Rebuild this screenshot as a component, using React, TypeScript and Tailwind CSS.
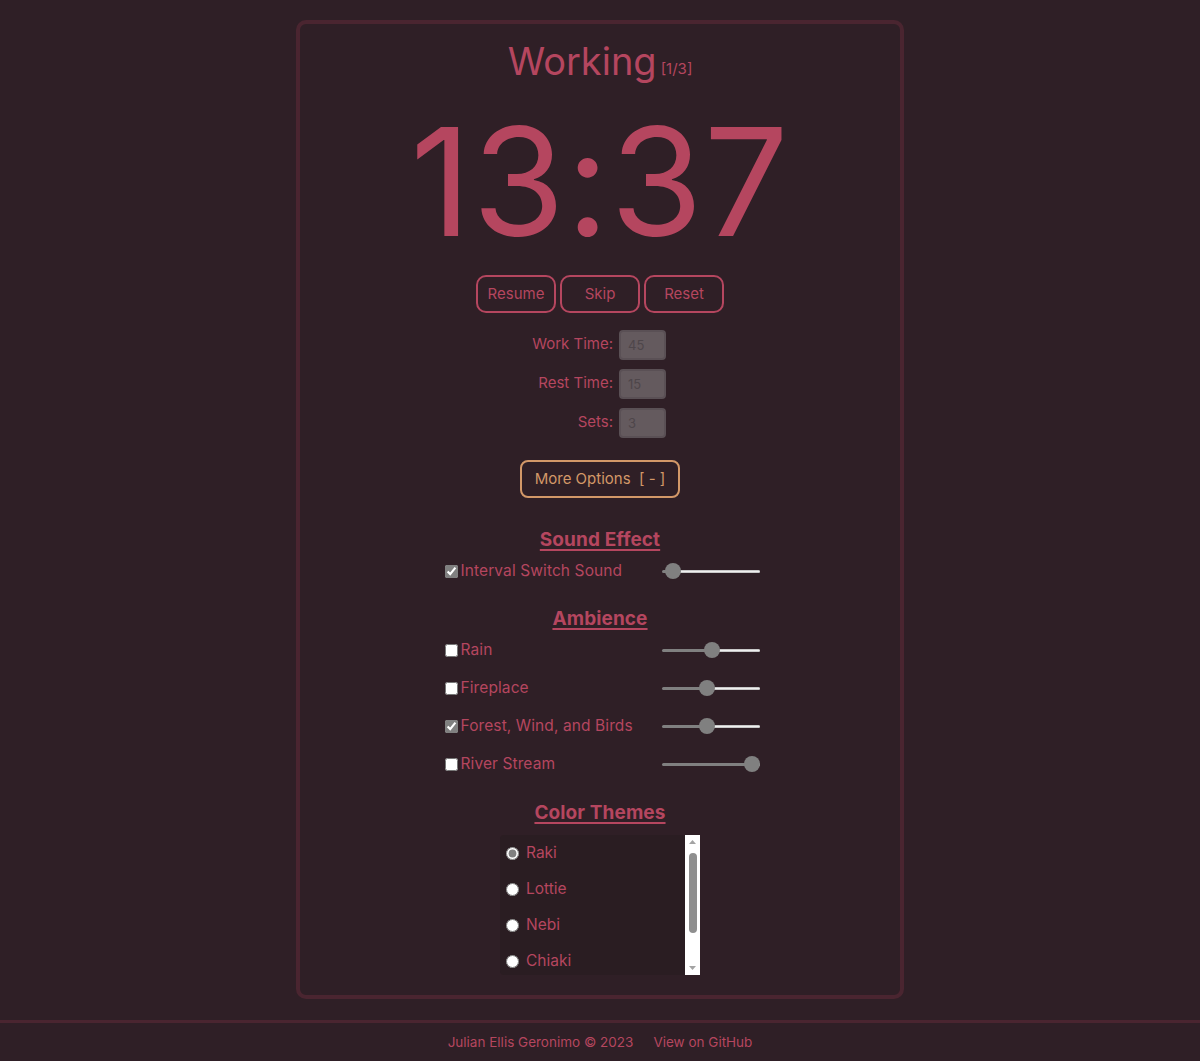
import React from "react";

const font = { fontFamily: "Inter, 'Noto Sans', sans-serif" };

function Row({ label, value }: { label: string; value: string }) {
  return (
    <div className="flex items-center justify-center h-[39px]">
      <div className="w-[200px] flex justify-end items-center gap-[6px]">
        <span className="text-[15px] text-[#b5465f]">{label}</span>
        <input
          disabled
          value={value}
          readOnly
          className="w-[47px] h-[30px] rounded-[4px] bg-[#645a5e] border-2 border-[#5a5055] text-[13px] text-[#4e464a] px-[7px]"
        />
      </div>
      <div className="w-[68px]" />
    </div>
  );
}

function Slider({ value }: { value: number }) {
  const left = (value / 100) * 82;
  return (
    <div className="relative w-[98px] h-[16px] flex items-center">
      <div className="h-[3px] bg-[#808080] rounded-l-[2px]" style={{ width: left + 8 }} />
      <div className="h-[3px] flex-1 bg-[#efefef] border-y border-[#c8c8c8] rounded-r-[2px]" />
      <div className="absolute top-0 w-[16px] h-[16px] rounded-full bg-[#808080]" style={{ left }} />
    </div>
  );
}

function SoundRow({ label, checked, value }: { label: string; checked?: boolean; value: number }) {
  return (
    <div className="flex items-center w-[316px] h-[38px] ml-[3px]">
      <input type="checkbox" defaultChecked={checked} className="accent-[#808080] w-[13px] h-[13px] m-0 ml-[1px]" />
      <span className="ml-[3px] text-[15.5px] tracking-[0.1px] text-[#b5465f] flex-1">{label}</span>
      <Slider value={value} />
    </div>
  );
}

function Heading({ children, className = "" }: { children: React.ReactNode; className?: string }) {
  return (
    <h2 className={`text-[19px] font-bold tracking-[0.1px] underline decoration-[2px] underline-offset-[3px] text-[#b5465f] leading-[26px] ${className}`}>
      {children}
    </h2>
  );
}

export default function App() {
  const themes = ["Raki", "Lottie", "Nebi", "Chiaki"];
  return (
    <div className="min-h-[1061px] bg-[#2f1f26] flex flex-col items-center" style={font}>
      <div className="mt-[20px] w-[608px] h-[979px] border-4 border-[#4a2530] rounded-[10px] flex flex-col items-center">
        <div className="mt-[13px] flex items-end text-[#b5465f]">
          <span className="text-[38px] leading-[48px]">Working</span>
          <span className="text-[15px] leading-[24px] ml-[4px] mb-[4px]">[1/3]</span>
        </div>
        <div className="text-[150px] leading-[150px] text-[#b5465f] mt-[22px] tracking-[1px]">13:37</div>
        <div className="flex gap-[4px] mt-[18px]">
          {["Resume", "Skip", "Reset"].map((b) => (
            <button key={b} className="w-[80px] h-[38px] border-2 border-[#b5465f] rounded-[10px] text-[15px] text-[#b5465f]">
              {b}
            </button>
          ))}
        </div>
        <div className="mt-[12px] flex flex-col">
          <Row label="Work Time:" value="45" />
          <Row label="Rest Time:" value="15" />
          <Row label="Sets:" value="3" />
        </div>
        <button className="mt-[18px] w-[160px] h-[38px] border-2 border-[#d39868] rounded-[8px] text-[15px] text-[#d39868]">
          More Options&nbsp; [ - ]
        </button>
        <Heading className="mt-[29px]">Sound Effect</Heading>
        <div className="mt-[-1px]">
          <SoundRow label="Interval Switch Sound" checked value={4} />
        </div>
        <Heading className="mt-[16px]">Ambience</Heading>
        <div className="mt-[-1px] flex flex-col">
          <SoundRow label="Rain" value={52} />
          <SoundRow label="Fireplace" value={46} />
          <SoundRow label="Forest, Wind, and Birds" checked value={46} />
          <SoundRow label="River Stream" value={100} />
        </div>
        <Heading className="mt-[17px]">Color Themes</Heading>
        <div className="mt-[9px] w-[200px] h-[140px] flex">
          <div className="flex-1 overflow-hidden bg-[#2a1d22] rounded-l-[4px]">
            {themes.map((t, i) => (
              <label key={t} className="flex items-center h-[36px] pl-[6px]">
                <input type="radio" name="theme" defaultChecked={i === 0} className="accent-[#808080] w-[13px] h-[13px] m-0" />
                <span className="ml-[7px] text-[15.5px] text-[#b5465f]">{t}</span>
              </label>
            ))}
          </div>
          <div className="w-[15px] h-full bg-white flex flex-col items-center">
            <svg width="15" height="14" viewBox="0 0 15 14">
              <path d="M4 9 L7.5 5 L11 9 Z" fill="#a3a3a3" />
            </svg>
            <div className="w-[8px] h-[80px] rounded-[4px] bg-[#8f8f8f] mt-[4px]" />
            <div className="flex-1" />
            <svg width="15" height="14" viewBox="0 0 15 14">
              <path d="M4 5 L7.5 9 L11 5 Z" fill="#a3a3a3" />
            </svg>
          </div>
        </div>
      </div>
      <div className="mt-[21px] w-full border-t-[3px] border-[#4a2530] h-[38px] pt-[3px] flex items-center justify-center gap-[20px] text-[13.5px] text-[#b5465f]">
        <span>Julian Ellis Geronimo © 2023</span>
        <span>View on GitHub</span>
      </div>
    </div>
  );
}
